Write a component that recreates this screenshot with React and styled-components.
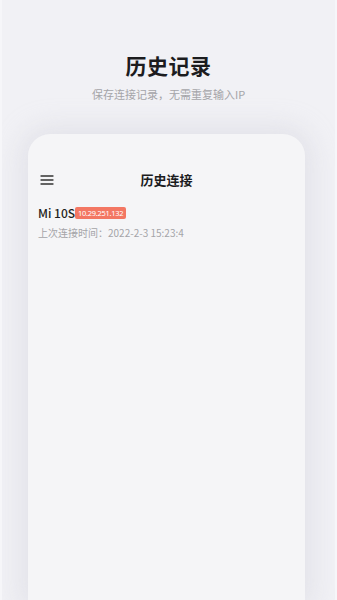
import React from 'react';
import styled, { createGlobalStyle } from 'styled-components';

const GlobalStyle = createGlobalStyle`
    html, body {
        margin: 0;
        padding: 0;
        background: #f1f1f5;
    }
    body {
        font-family: "Noto Sans CJK SC", "Noto Sans", sans-serif;
    }
`;

const Page = styled.div`
    width: 337px;
    height: 600px;
    overflow: hidden;
    display: flex;
    flex-direction: column;
    align-items: center;
    background: #f1f1f5;
    border-left: 2px solid #f6f6f9;
    border-right: 2px solid #f6f6f9;
    box-sizing: border-box;
`;

const Title = styled.h1`
    margin: 50px 0 0;
    font-size: 21px;
    line-height: 30px;
    font-weight: 700;
    color: #1c1c1e;
    letter-spacing: 0.5px;
`;

const Subtitle = styled.p`
    margin: 6px 0 0;
    font-size: 11px;
    line-height: 16px;
    color: #a4a4a8;
`;

const Card = styled.section`
    width: 277px;
    flex: 1;
    margin: 32px 0 0 -4px;
    background: #f5f5f7;
    border-radius: 22px 22px 0 0;
    box-shadow: 0 0 26px 8px rgba(200, 200, 212, 0.35);
    padding: 36px 10px 0;
    box-sizing: border-box;
`;

const Header = styled.div`
    display: grid;
    grid-template-columns: 24px 1fr 24px;
    align-items: center;
    padding: 0 2px;
`;

const HeaderTitle = styled.span`
    text-align: center;
    font-size: 13px;
    font-weight: 700;
    color: #1c1c1e;
`;

const Item = styled.div`
    margin-top: 16px;
    display: flex;
    flex-direction: column;
    gap: 4px;
`;

const NameRow = styled.div`
    display: flex;
    align-items: center;
`;

const Name = styled.span`
    font-size: 12px;
    font-weight: 500;
    color: #1f1f21;
    line-height: 16px;
`;

const Badge = styled.span`
    padding: 0 3px;
    height: 12px;
    line-height: 12px;
    border-radius: 2px;
    background: #f37763;
    color: #fff;
    font-family: "Noto Sans", sans-serif;
    font-size: 7.5px;
    letter-spacing: -0.3px;
`;

const Meta = styled.span`
    font-size: 10px;
    color: #a4a4a8;
    line-height: 16px;
`;

const MenuIcon = () => (
    <svg width="14" height="10" viewBox="0 0 14 10">
        <path d="M1 1h12M1 5h12M1 9h12" stroke="#333" strokeWidth="1.3" strokeLinecap="round" />
    </svg>
);

const App = () => (
    <>
        <GlobalStyle />
        <Page>
            <Title>历史记录</Title>
            <Subtitle>保存连接记录，无需重复输入IP</Subtitle>
            <Card>
                <Header>
                    <MenuIcon />
                    <HeaderTitle>历史连接</HeaderTitle>
                    <span />
                </Header>
                <Item>
                    <NameRow>
                        <Name>Mi 10S</Name>
                        <Badge>10.29.251.132</Badge>
                    </NameRow>
                    <Meta>上次连接时间：2022-2-3 15:23:4</Meta>
                </Item>
            </Card>
        </Page>
    </>
);

export default App;
